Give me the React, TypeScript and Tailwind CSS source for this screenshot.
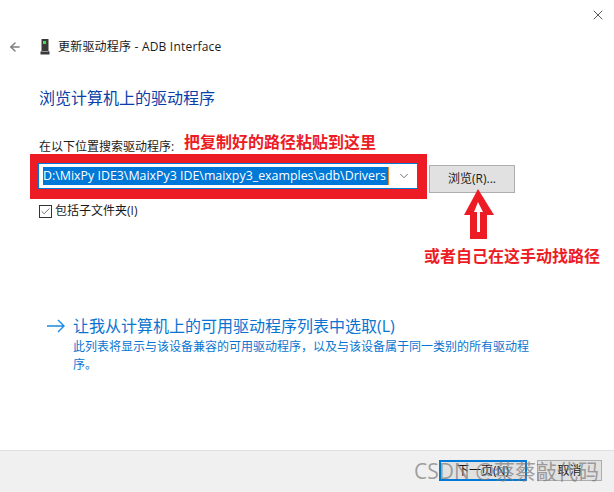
import React from 'react';
import { ArrowLeft, ChevronDown, X, Check } from 'lucide-react';

const FONT = "font-['Open_Sans','Noto_Sans_CJK_SC',sans-serif]";

const RedArrow = () => (
  <svg width="32" height="52" viewBox="0 0 32 52" className="absolute left-[463px] top-[188px]">
    <path
      d="M15 1 L31 27 L24 27 L24 51 L7 51 L7 27 L1 27 Z M15 14 L11 24 L14 24 L14 44 L17 44 L17 24 L20 24 Z"
      fill="#ed1c24"
      fillRule="evenodd"
    />
  </svg>
);

const DeviceIcon = () => (
  <svg width="10" height="16" viewBox="0 0 10 16" className="shrink-0">
    <path d="M1.5 0 H8.5 V12.5 H9.5 V15.5 H0.5 V12.5 H1.5 Z" fill="#3a3a3a" />
    <rect x="3" y="2" width="3" height="3" fill="#3fe05a" />
    <rect x="2" y="12" width="6" height="1" fill="#9a9a9a" />
  </svg>
);

export default function App() {
  return (
    <div className={`relative w-[614px] h-[492px] overflow-hidden bg-white flex flex-col text-[12px] text-[#1a1a1a] ${FONT}`}>
      <div className="flex-1 flex flex-col">
        <div className="flex justify-end pt-[7px] pr-[8px] h-[38px]">
          <X size={16} strokeWidth={1} className="text-black" />
        </div>

        <div className="flex items-center h-[17px] pl-[8px]">
          <ArrowLeft size={14} strokeWidth={2.5} className="text-[#7d7d7d]" />
          <div className="ml-[18px]">
            <DeviceIcon />
          </div>
          <span className="ml-[8px] leading-[17px] tracking-[0.2px]">更新驱动程序 - ADB Interface</span>
        </div>

        <div className="pl-[39px] mt-[32px] text-[16px] leading-[22px] text-[#0a3fa8]">浏览计算机上的驱动程序</div>

        <div className="pl-[39px] mt-[30px] leading-[16px]">在以下位置搜索驱动程序:</div>

        <div className="flex items-start ml-[30px] mt-[-1px]">
          <div className="w-[397px] h-[45px] bg-[#ed1c24] pl-[8px] pr-[9px] pt-[9px] pb-[10px]">
            <div className="h-[26px] bg-white border border-[#0078d7] flex items-center pl-[4px] pr-[6px]">
              <div className="w-[346px] h-[18px] leading-[18px] bg-[#0078d7] text-white text-[12.4px] whitespace-nowrap overflow-hidden border-r border-[#e8862a]">
                D:\MixPy IDE3\MaixPy3 IDE\maixpy3_examples\adb\Drivers
              </div>
              <ChevronDown size={14} strokeWidth={1.25} className="ml-auto text-[#444444]" />
            </div>
          </div>
          <button className="ml-[2px] mt-[11px] w-[86px] h-[28px] bg-[#e1e1e1] border border-[#adadad] text-[12px]">
            浏览(R)...
          </button>
        </div>

        <label className="flex items-center pl-[39px] mt-[4px] h-[16px]">
          <span className="w-[13px] h-[13px] border border-[#333333] flex items-center justify-center">
            <Check size={11} strokeWidth={1.5} className="text-[#333333]" />
          </span>
          <span className="ml-[3px]">包括子文件夹(I)</span>
        </label>

        <div className="flex items-start pl-[47px] mt-[96px]">
          <svg width="18" height="14" viewBox="0 0 18 14" className="mt-[4px] shrink-0">
            <path d="M0 7 H17 M11 1 L17 7 L11 13" fill="none" stroke="#1c8ae0" strokeWidth="1.4" />
          </svg>
          <div className="ml-[8px] w-[470px] text-[#0b74d0]">
            <div className="text-[16px] leading-[22px]">让我从计算机上的可用驱动程序列表中选取(L)</div>
            <div className="text-[12px] leading-[18px] mt-[1px] w-[460px]">
              此列表将显示与该设备兼容的可用驱动程序{'\uFF0C'}以及与该设备属于同一类别的所有驱动程序。
            </div>
          </div>
        </div>
      </div>

      <div className="h-[42px] shrink-0 bg-[#f0f0f0] border-t border-[#dfdfdf] flex items-start justify-end pt-[9px] pr-[12px] gap-[10px]">
        <button className="w-[88px] h-[21px] bg-[#e1e1e1] border-2 border-[#0078d7] leading-none text-[12px]">下一页(N)</button>
        <button className="w-[65px] h-[21px] bg-[#e1e1e1] border border-[#adadad] leading-none text-[12px]">取消</button>
      </div>

      <div className="absolute left-[184px] top-[131px] text-[16px] leading-[22px] font-bold text-[#ed1c24] whitespace-nowrap">
        把复制好的路径粘贴到这里
      </div>
      <RedArrow />
      <div className="absolute left-[424px] top-[245px] text-[16px] leading-[22px] font-bold text-[#ed1c24] whitespace-nowrap">
        或者自己在这手动找路径
      </div>

      <div className="absolute left-[414px] top-[459px] text-[21px] leading-[24px] text-[#7a7a7a]/70 whitespace-nowrap">
        CSDN @蔡蔡敲代码
      </div>
    </div>
  );
}
